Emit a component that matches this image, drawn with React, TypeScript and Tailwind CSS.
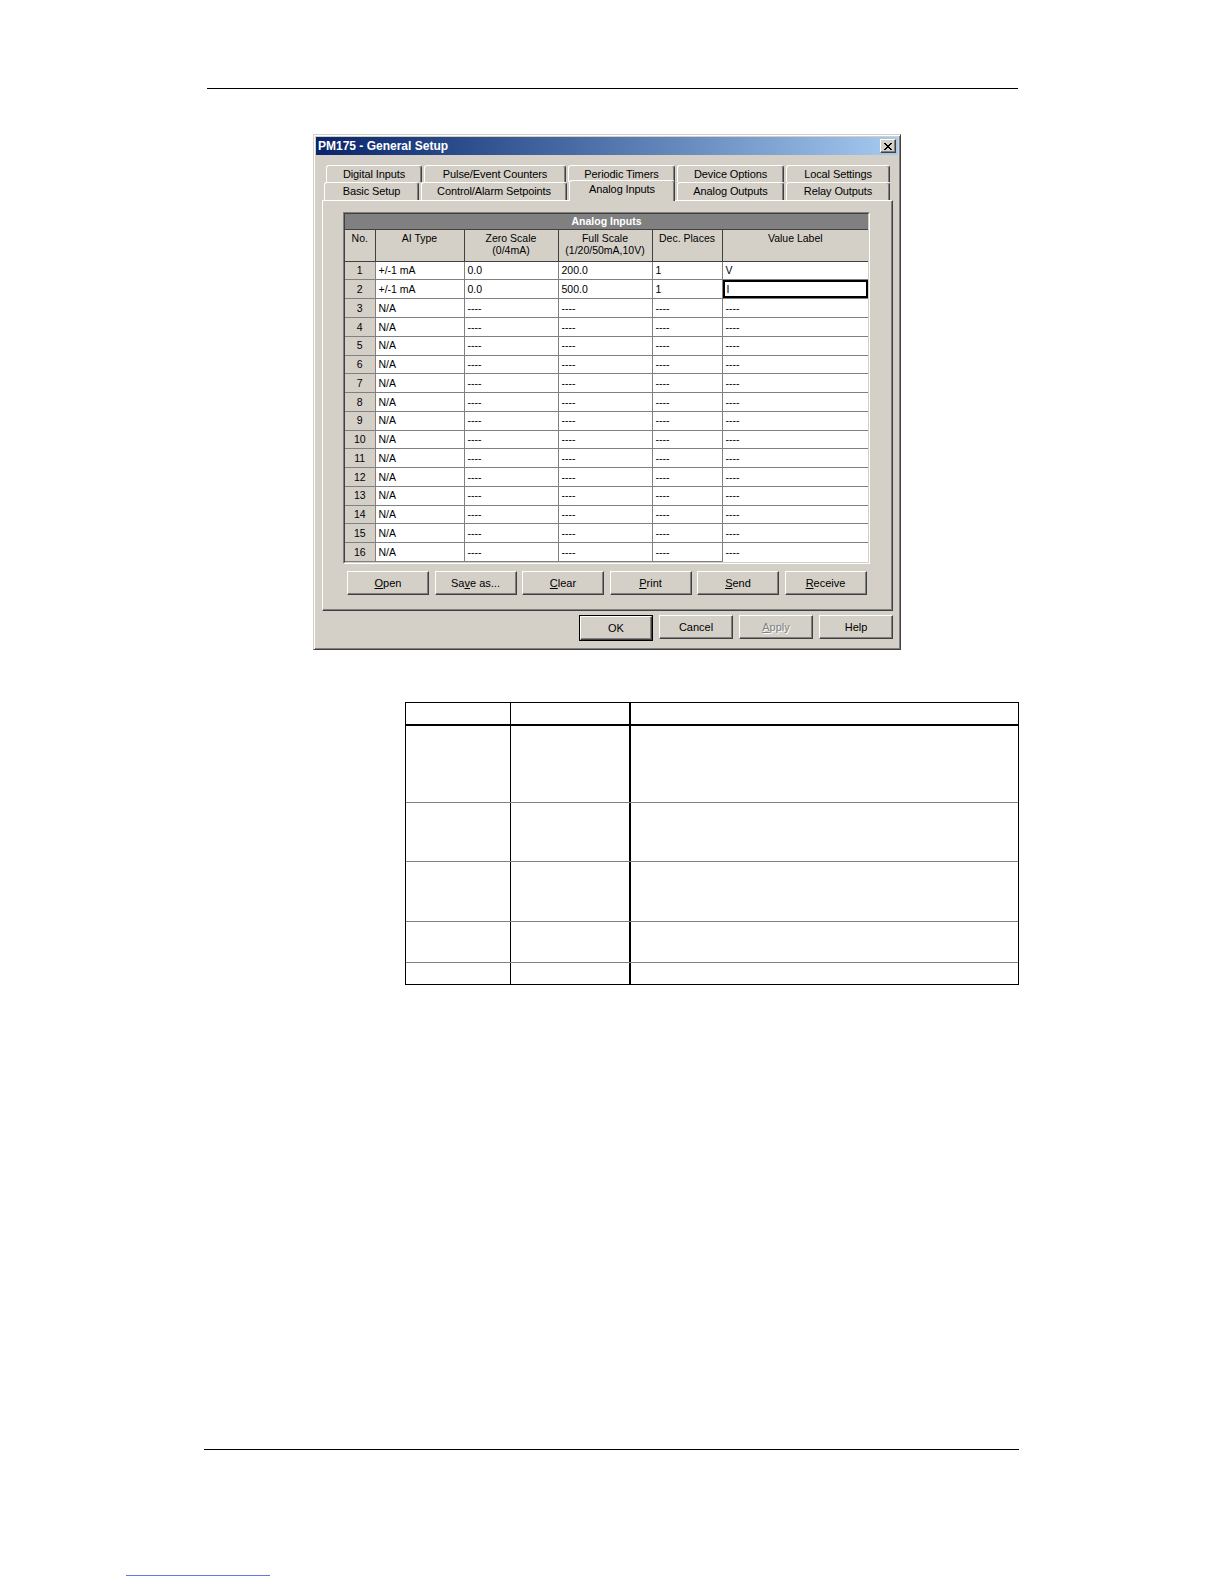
import React from "react";

const rows = Array.from({ length: 16 }, (_, i) => i + 1);

function Btn({ children, className = "", disabled = false }: { children: React.ReactNode; className?: string; disabled?: boolean }) {
  return (
    <div
      className={`h-[24px] flex items-center justify-center bg-[#d4d0c8] border border-t-white border-l-white border-r-[#404040] border-b-[#404040] shadow-[inset_-1px_-1px_0_#808080] text-[11px] ${disabled ? "text-[#808080] [text-shadow:1px_1px_0_#ffffff]" : "text-black"} ${className}`}
    >
      {children}
    </div>
  );
}

function Tab({ label, className = "", selected = false }: { label: string; className?: string; selected?: boolean }) {
  return (
    <div
      className={`flex items-center justify-center bg-[#d4d0c8] border-l border-t border-l-white border-t-white border-r border-r-[#404040] shadow-[inset_-1px_0_0_#808080] rounded-t-[3px] text-[11px] tracking-[-0.1px] text-black ${
        selected ? "h-[21px] -mt-[3px] relative z-10 pb-[3px]" : "h-[18px]"
      } ${className}`}
    >
      {label}
    </div>
  );
}

export default function App() {
  const cell = "border-r border-b border-[#808080] px-[3px] text-[10.5px] leading-none text-black align-middle";
  return (
    <div className="w-[1224px] h-[1584px] bg-white relative font-['Liberation_Sans',Arial,sans-serif] flex flex-col">
      {/* top rule */}
      <div className="mt-[88px] ml-[207px] w-[811px] h-px bg-black" />

      {/* dialog */}
      <div className="mt-[45px] ml-[313px] w-[588px] h-[516px] bg-[#d4d0c8] border border-t-[#d4d0c8] border-l-[#d4d0c8] border-r-[#404040] border-b-[#404040] shadow-[inset_1px_1px_0_#ffffff,inset_-1px_-1px_0_#808080] p-[2px] flex flex-col">
        {/* title bar */}
        <div className="h-[18px] bg-gradient-to-r from-[#0a246a] to-[#a6caf0] flex items-center justify-between pl-[2px] pr-[2px]">
          <span className="text-white font-bold text-[12px] leading-none">PM175 - General Setup</span>
          <div className="w-[16px] h-[14px] bg-[#d4d0c8] border border-t-white border-l-white border-r-[#404040] border-b-[#404040] shadow-[inset_-1px_-1px_0_#808080] flex items-center justify-center">
            <svg width="8" height="7" viewBox="0 0 8 7">
              <path d="M0 0 L7 7 M1 0 L8 7 M7 0 L0 7 M8 0 L1 7" stroke="#000" strokeWidth="1" />
            </svg>
          </div>
        </div>

        {/* tabs */}
        <div className="mt-[10px] ml-[10px] flex gap-[2px]">
          <Tab label="Digital Inputs" className="w-[96px] !h-[17px]" />
          <Tab label="Pulse/Event Counters" className="w-[142px] !h-[17px]" />
          <Tab label="Periodic Timers" className="w-[107px] !h-[17px]" />
          <Tab label="Device Options" className="w-[107px] !h-[17px]" />
          <Tab label="Local Settings" className="w-[104px] !h-[17px]" />
        </div>
        <div className="ml-[8px] flex gap-[2px] items-end">
          <Tab label="Basic Setup" className="w-[95px]" />
          <Tab label="Control/Alarm Setpoints" className="w-[146px]" />
          <Tab label="Analog Inputs" selected className="w-[106px] -mb-px bg-[#d4d0c8]" />
          <Tab label="Analog Outputs" className="w-[107px]" />
          <Tab label="Relay Outputs" className="w-[104px]" />
        </div>

        {/* tab panel */}
        <div className="ml-[6px] w-[571px] h-[411px] border border-t-white border-l-white border-r-[#404040] border-b-[#404040] shadow-[inset_-1px_-1px_0_#808080] flex flex-col">
          {/* grid */}
          <div className="mt-[11px] ml-[20px] w-[527px] border border-t-[#808080] border-l-[#808080] border-r-white border-b-white">
            <div className="border border-t-[#404040] border-l-[#404040] border-r-[#d4d0c8] border-b-[#d4d0c8] bg-white">
              <div className="h-[16px] bg-[#808080] text-white font-bold text-[10.5px] flex items-center justify-center border-b border-[#404040]">
                Analog Inputs
              </div>
              <table className="w-full border-collapse table-fixed">
                <colgroup>
                  <col className="w-[30px]" />
                  <col className="w-[89px]" />
                  <col className="w-[94px]" />
                  <col className="w-[94px]" />
                  <col className="w-[70px]" />
                  <col />
                </colgroup>
                <thead>
                  <tr className="h-[31px] bg-[#d4d0c8]">
                    {[
                      ["No."],
                      ["AI Type"],
                      ["Zero Scale", "(0/4mA)"],
                      ["Full Scale", "(1/20/50mA,10V)"],
                      ["Dec. Places"],
                      ["Value Label"],
                    ].map((h, i) => (
                      <th
                        key={i}
                        className={`border-b border-[#404040] ${i < 5 ? "border-r" : ""} font-normal text-[10.5px] leading-[12px] text-black align-top pt-[2px] text-center`}
                      >
                        {h.map((l, j) => (
                          <div key={j}>{l}</div>
                        ))}
                      </th>
                    ))}
                  </tr>
                </thead>
                <tbody>
                  {rows.map((r) => {
                    const active = r <= 2;
                    return (
                      <tr key={r} className="h-[18.75px]">
                        <td className="border-r border-b border-[#808080] bg-[#d4d0c8] text-center text-[10.5px] leading-none text-black">{r}</td>
                        <td className={cell}>{active ? "+/-1 mA" : "N/A"}</td>
                        <td className={cell}>{active ? "0.0" : "----"}</td>
                        <td className={cell}>{active ? (r === 1 ? "200.0" : "500.0") : "----"}</td>
                        <td className={cell}>{active ? "1" : "----"}</td>
                        <td className={`border-b border-[#808080] text-[10.5px] leading-none text-black p-0 ${r === 16 ? "border-b-0" : ""}`}>
                          {r === 2 ? (
                            <div className="h-[18px] border-2 border-black flex items-center px-[2px] text-black">I</div>
                          ) : (
                            <div className="px-[3px]">{r === 1 ? "V" : "----"}</div>
                          )}
                        </td>
                      </tr>
                    );
                  })}
                </tbody>
              </table>
            </div>
          </div>

          {/* action buttons */}
          <div className="mt-[7px] ml-[24px] flex gap-[5.5px]">
            <Btn className="w-[82px]"><span><u>O</u>pen</span></Btn>
            <Btn className="w-[82px]"><span>Sa<u>v</u>e as...</span></Btn>
            <Btn className="w-[82px]"><span><u>C</u>lear</span></Btn>
            <Btn className="w-[82px]"><span><u>P</u>rint</span></Btn>
            <Btn className="w-[82px]"><span><u>S</u>end</span></Btn>
            <Btn className="w-[82px]"><span><u>R</u>eceive</span></Btn>
          </div>
        </div>

        {/* dialog buttons */}
        <div className="mt-[4px] ml-[263px] flex gap-[6px]">
          <div className="border border-black">
            <Btn className="w-[72px] h-[22px]">OK</Btn>
          </div>
          <Btn className="w-[74px]">Cancel</Btn>
          <Btn className="w-[74px]" disabled><span><u>A</u>pply</span></Btn>
          <Btn className="w-[74px]">Help</Btn>
        </div>
      </div>

      {/* lower table */}
      <div className="mt-[52px] ml-[405px] w-[614px] border border-black flex flex-col">
        <div className="h-[23px] flex border-b-2 border-black">
          <div className="w-[105px] border-r border-black" />
          <div className="w-[120px] border-r-2 border-black" />
          <div className="flex-1" />
        </div>
        {[77, 59, 60, 41, 21].map((h, i, arr) => (
          <div
            key={i}
            className={`flex ${i < arr.length - 1 ? "border-b border-[#808080]" : ""}`}
            style={{ height: h }}
          >
            <div className="w-[105px] border-r border-black" />
            <div className="w-[120px] border-r-2 border-black" />
            <div className="flex-1" />
          </div>
        ))}
      </div>

      {/* bottom rule */}
      <div className="mt-[464px] ml-[204px] w-[815px] h-px bg-black" />

      {/* footer link line */}
      <div className="mt-[125px] ml-[126px] w-[144px] h-px bg-[#5b7be0]" />
    </div>
  );
}
